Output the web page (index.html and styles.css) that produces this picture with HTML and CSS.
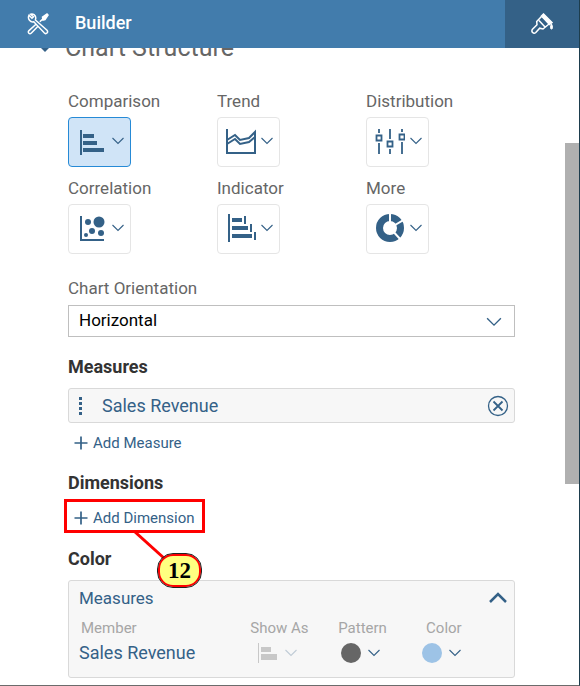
FILE: index.html
```html
<!DOCTYPE html>
<html lang="en">
<head>
<meta charset="utf-8">
<meta name="viewport" content="width=device-width, initial-scale=1">
<title>Builder</title>
<link rel="stylesheet" href="styles.css">
</head>
<body>
<svg class="defs" aria-hidden="true">
  <symbol id="chevron" viewBox="0 0 12 8"><path d="M.5 1 6 6.500 11.500 1" fill="none" stroke="currentColor" stroke-width="1.100"/></symbol>
  <symbol id="plus" viewBox="0 0 14 14"><path d="M7 .5v13M.5 7h13" fill="none" stroke="currentColor" stroke-width="1.700"/></symbol>
</svg>
<div class="panel">
  <header class="topbar">
    <svg class="tools" viewBox="0 0 22 22" aria-hidden="true">
      <path d="M2 2.200 5 5.200 6.500 3.800 3.600 1.200C6 .3 8.800 2 8.800 5L8.400 7 20 17.300C21.600 19.500 19.300 21.600 17.400 20L6.800 8.800C3.500 9.600.2 6.200 2 2.200Z"/>
      <path d="M9 11.200 2 17.600C.3 19.600 2.500 21.800 4.400 20L11 13.200M12.800 8.800 16.600 5.200"/>
      <path class="solid" d="M15.500 4 20 1 21 2 18 6.500 16 7Z"/>
    </svg>
    <h1 class="title">Builder</h1>
    <button class="styling" type="button" aria-label="Styling">
      <svg class="brush" viewBox="0 0 22 22" aria-hidden="true">
        <path d="M10.500 3.500 5.700 8.600 6 11.700 1.500 16.200C-.2 18.700 2.500 21.600 4.800 19.500L8.700 15.200 12 16 18 11M8 7.500 14 14"/>
        <path class="solid" d="m10.500 3 2-2 8.500 8.500-2.500 2Z"/>
        <path class="drop" d="M20.500 11c1.500 3 1.200 5 0 5s-1.500-2 0-5Z"/>
      </svg>
    </button>
  </header>

  <main class="content">
    <h2 class="section-title"><span class="marker" aria-hidden="true"></span>Chart Structure</h2>

    <div class="chart-types">
      <div class="chart-type">
        <label for="comparison">Comparison</label>
        <button id="comparison" class="tile selected" type="button">
          <svg class="glyph" viewBox="0 0 30 30" aria-hidden="true"><path class="fill" d="M3 3h2v25H3zM6 7h11v4H6zM6 14h14v4H6zM6 21h21v4H6z"/></svg>
          <svg class="chevron"><use href="#chevron"/></svg>
        </button>
      </div>
      <div class="chart-type">
        <label for="trend">Trend</label>
        <button id="trend" class="tile" type="button">
          <svg class="glyph" viewBox="0 0 30 30" aria-hidden="true"><path class="line" d="M1 2v24h28V5l-6 6-9 2-5-5-8 5M1 17l8-5 5 5 9-2 6-5"/></svg>
          <svg class="chevron"><use href="#chevron"/></svg>
        </button>
      </div>
      <div class="chart-type">
        <label for="distribution">Distribution</label>
        <button id="distribution" class="tile" type="button">
          <svg class="glyph" viewBox="0 0 30 30" aria-hidden="true"><path class="line thin" d="M4 2v4M4 16v11M1.500 8.500h5v5h-5zM15 2v10M15 22v5M12.500 14.500h5v5h-5zM27 2v3M27 15v12M24.500 7.500h5v5h-5z"/></svg>
          <svg class="chevron"><use href="#chevron"/></svg>
        </button>
      </div>
      <div class="chart-type">
        <label for="correlation">Correlation</label>
        <button id="correlation" class="tile" type="button">
          <svg class="glyph" viewBox="0 0 30 30" aria-hidden="true"><path class="line" d="M4 2v24h23"/><g class="fill"><circle cx="11" cy="8" r="3"/><circle cx="22" cy="8" r="5.500"/><circle cx="15" cy="17" r="3"/><circle cx="24" cy="19" r="3"/><circle cx="9" cy="21" r="2"/></g></svg>
          <svg class="chevron"><use href="#chevron"/></svg>
        </button>
      </div>
      <div class="chart-type">
        <label for="indicator">Indicator</label>
        <button id="indicator" class="tile" type="button">
          <svg class="glyph" viewBox="0 0 30 30" aria-hidden="true"><path class="fill" d="M2 0h2v28H2zM6 4h10v4H6zM6 12h16v4H6zM6 20h20v4H6zM18 2h2v8h-2zM24 10h2v8h-2zM28 18h2v8h-2z"/></svg>
          <svg class="chevron"><use href="#chevron"/></svg>
        </button>
      </div>
      <div class="chart-type">
        <label for="more">More</label>
        <button id="more" class="tile" type="button">
          <svg class="glyph" viewBox="0 0 30 30" aria-hidden="true"><circle class="ring" cx="15" cy="14" r="10.500"/><path class="cut" d="M15 14V-1M15 14 30 5M15 14 26 26"/></svg>
          <svg class="chevron"><use href="#chevron"/></svg>
        </button>
      </div>
    </div>

    <div class="orientation">
      <label for="orientation">Chart Orientation</label>
      <div class="select-box">
        <select id="orientation"><option>Horizontal</option><option>Vertical</option></select>
        <svg class="chevron large"><use href="#chevron"/></svg>
      </div>
    </div>

    <section class="group">
      <h3>Measures</h3>
      <div class="measure">
        <svg class="grip" viewBox="0 0 4 20" aria-hidden="true"><path d="M0 1h3v3H0zM0 6h3v3H0zM0 11h3v3H0zM0 16h3v3H0z"/></svg>
        <span class="measure-name">Sales Revenue</span>
        <button class="remove" type="button" aria-label="Remove Sales Revenue">
          <svg viewBox="0 0 22 22" aria-hidden="true"><circle cx="11" cy="11" r="9.500"/><path class="cross" d="m6.500 6.500 9 9m0-9-9 9"/></svg>
        </button>
      </div>
      <button class="add" type="button"><svg class="plus"><use href="#plus"/></svg>Add Measure</button>
    </section>

    <section class="group">
      <h3>Dimensions</h3>
      <div class="callout">
        <button class="add" type="button"><svg class="plus"><use href="#plus"/></svg>Add Dimension</button>
        <svg class="pointer" viewBox="0 0 34 32" aria-hidden="true"><path d="m2 1 30 27"/></svg>
        <span class="badge">12</span>
      </div>
    </section>

    <section class="group">
      <h3>Color</h3>
      <div class="color-card">
        <div class="card-head">
          <span>Measures</span>
          <button class="collapse" type="button" aria-label="Collapse">
            <svg viewBox="0 0 18 12" aria-hidden="true"><path d="m1 10 8-8 8 8"/></svg>
          </button>
        </div>
        <table class="members">
          <thead><tr><th class="member">Member</th><th>Show As</th><th>Pattern</th><th>Color</th></tr></thead>
          <tbody><tr>
            <td>Sales Revenue</td>
            <td><button class="choice" type="button" disabled aria-label="Show as bars">
              <svg class="bars" viewBox="0 0 20 20" aria-hidden="true"><path d="M0 0h1v20H0zM3 4h10v5H3zM3 11h16v6H3z"/></svg>
              <svg class="chevron"><use href="#chevron"/></svg></button></td>
            <td><button class="choice pattern" type="button" aria-label="Pattern"><span class="dot solid-dot"></span><svg class="chevron"><use href="#chevron"/></svg></button></td>
            <td><button class="choice hue" type="button" aria-label="Color"><span class="dot blue-dot"></span><svg class="chevron"><use href="#chevron"/></svg></button></td>
          </tr></tbody>
        </table>
      </div>
    </section>
  </main>
  <div class="scroll-thumb" aria-hidden="true"></div>
</div>
</body>
</html>
```

FILE: styles.css
```css
* { box-sizing: border-box; }

body {
  margin: 0;
  background: #fff;
  color: #346187;
  font: 18px/22px Roboto, "Liberation Sans", sans-serif;
}

button {
  margin: 0;
  padding: 0;
  border: 0;
  background: none;
  color: inherit;
  font: inherit;
}

svg { display: block; flex: none; }
h1, h2, h3 { margin: 0; }
.defs { position: absolute; width: 0; height: 0; }

.panel {
  position: relative;
  min-height: 100vh;
  border-right: 1px solid #1d3d4d;
  border-bottom: 1px solid #6b6b6b;
}

.topbar {
  position: relative;
  z-index: 1;
  display: flex;
  align-items: center;
  height: 48px;
  padding-left: 27px;
  background: #427cac;
  color: #fff;
}
.tools, .brush {
  width: 22px;
  height: 22px;
  fill: none;
  stroke: #fff;
  stroke-width: 1.5;
}
.solid { fill: #fff; }
.drop { fill: #fff; stroke-width: 1; }
.title {
  flex: 1;
  padding-left: 26px;
  font-size: 18px;
  font-weight: 500;
  line-height: 46px;
  align-self: flex-start;
}
.styling {
  display: flex;
  align-items: center;
  justify-content: center;
  width: 74px;
  height: 48px;
  background: #346187;
}

.content { padding: 0 64px 7px 68px; }

.section-title {
  display: flex;
  align-items: center;
  gap: 15px;
  height: 30px;
  margin: -15px 0 27px -28px;
  color: #666;
  font-size: 25px;
  font-weight: 400;
  line-height: 30px;
}
.marker {
  margin-top: 2px;
  border: solid transparent;
  border-width: 5px 5px 0;
  border-top-color: #346187;
}

.chart-types {
  display: grid;
  grid-template-columns: repeat(3, 1fr);
  row-gap: 10px;
}
.chart-type, .orientation {
  display: flex;
  flex-direction: column;
  align-items: flex-start;
  gap: 5px;
  color: #666;
}
.chart-type label, .orientation label { font-size: 17px; }
.tile {
  display: flex;
  align-items: center;
  justify-content: center;
  gap: 5px;
  width: 63px;
  height: 50px;
  border: 1px solid #e5e5e5;
  border-radius: 4px;
  color: #346187;
}
.tile.selected { border-color: #268ad6; background: #d0e4f7; }
.tile .glyph { margin-left: 1px; }
.glyph { width: 30px; height: 30px; }
.fill { fill: #346187; }
.line { fill: none; stroke: #346187; stroke-width: 2; }
.thin { stroke-width: 1.8; }
.ring { fill: none; stroke: #346187; stroke-width: 7; }
.cut { fill: none; stroke: #fff; stroke-width: 2; }
.chevron { width: 12px; height: 8px; }
.tile .chevron { margin-top: -2px; }
.chevron.large { width: 16px; height: 10px; }

.orientation { margin-top: 23px; gap: 6px; }
.select-box { position: relative; width: 100%; }
.select-box select {
  display: block;
  width: 100%;
  height: 32px;
  padding: 0 40px 2px 10px;
  border: 1px solid #bfbfbf;
  border-radius: 0;
  appearance: none;
  background: #fff;
  color: #000;
  font: inherit;
  font-size: 17px;
}
.select-box .chevron {
  position: absolute;
  top: 12px;
  right: 13px;
  color: #346187;
  pointer-events: none;
}

.group { margin-top: 19px; }
.group h3 { color: #333; font-size: 18px; font-weight: 700; }

.measure {
  display: flex;
  align-items: center;
  height: 35px;
  margin: 10px 0 9px;
  padding: 0 5px 0 10px;
  border: 1px solid #d9d9d9;
  border-radius: 3px;
  background: #f7f7f7;
}
.grip { width: 4px; height: 20px; fill: #346187; }
.measure-name { flex: 1; padding-left: 19px; }
.remove svg {
  width: 22px;
  height: 22px;
  fill: none;
  stroke: #346187;
  stroke-width: 1.3;
}
.cross { stroke-width: 1.8; }

.add {
  display: flex;
  align-items: center;
  gap: 5px;
  padding-left: 6px;
  font-size: 15px;
  line-height: 22px;
}
.plus { width: 14px; height: 14px; }
.group + .group { margin-top: 18px; }

.callout {
  position: relative;
  width: fit-content;
  margin: 5px 0 -3px -4px;
  padding: 5px 7px 1px 1px;
  border: 3px solid red;
}
.pointer {
  position: absolute;
  top: 29px;
  left: 66px;
  width: 34px;
  height: 32px;
  fill: none;
  stroke: red;
  stroke-width: 3;
}
.badge {
  position: absolute;
  top: 52px;
  left: 91px;
  width: 43px;
  height: 33px;
  border: 2px solid red;
  border-radius: 15px;
  outline: 1px solid #222;
  background: #ffff80;
  color: #000;
  font: bold 23px/29px "Liberation Serif", serif;
  text-align: center;
}

.color-card {
  margin-top: 10px;
  padding: 6px 0 11px 10px;
  border: 1px solid #d9d9d9;
  border-radius: 3px;
  background: #f7f7f7;
}
.card-head {
  display: flex;
  align-items: center;
  justify-content: space-between;
  padding-right: 7px;
  font-size: 17px;
}
.collapse svg {
  width: 18px;
  height: 12px;
  fill: none;
  stroke: #346187;
  stroke-width: 2.5;
}
.members {
  width: 100%;
  margin-top: 8px;
  border-collapse: collapse;
  table-layout: fixed;
}
.members th {
  width: 20%;
  padding: 0;
  color: #a6a6a6;
  font-size: 15px;
  font-weight: 400;
  line-height: 22px;
  text-align: left;
}
.members .member { width: 39%; padding-left: 2px; }
.members td { height: 27px; padding: 0; white-space: nowrap; }
.choice { display: flex; align-items: center; gap: 7px; }
.choice:disabled { padding-left: 8px; color: #c0ccd6; }
.pattern { padding-left: 3px; }
.hue { margin-left: -4px; }
.bars { width: 20px; height: 20px; fill: #c8c8c8; }
.dot { width: 20px; height: 20px; border-radius: 50%; }
.solid-dot { background: #666; }
.blue-dot { background: #9dc3e6; }

.scroll-thumb {
  position: absolute;
  top: 143px;
  right: 0;
  width: 14px;
  height: 341px;
  background: #b0b0b0;
}
```
